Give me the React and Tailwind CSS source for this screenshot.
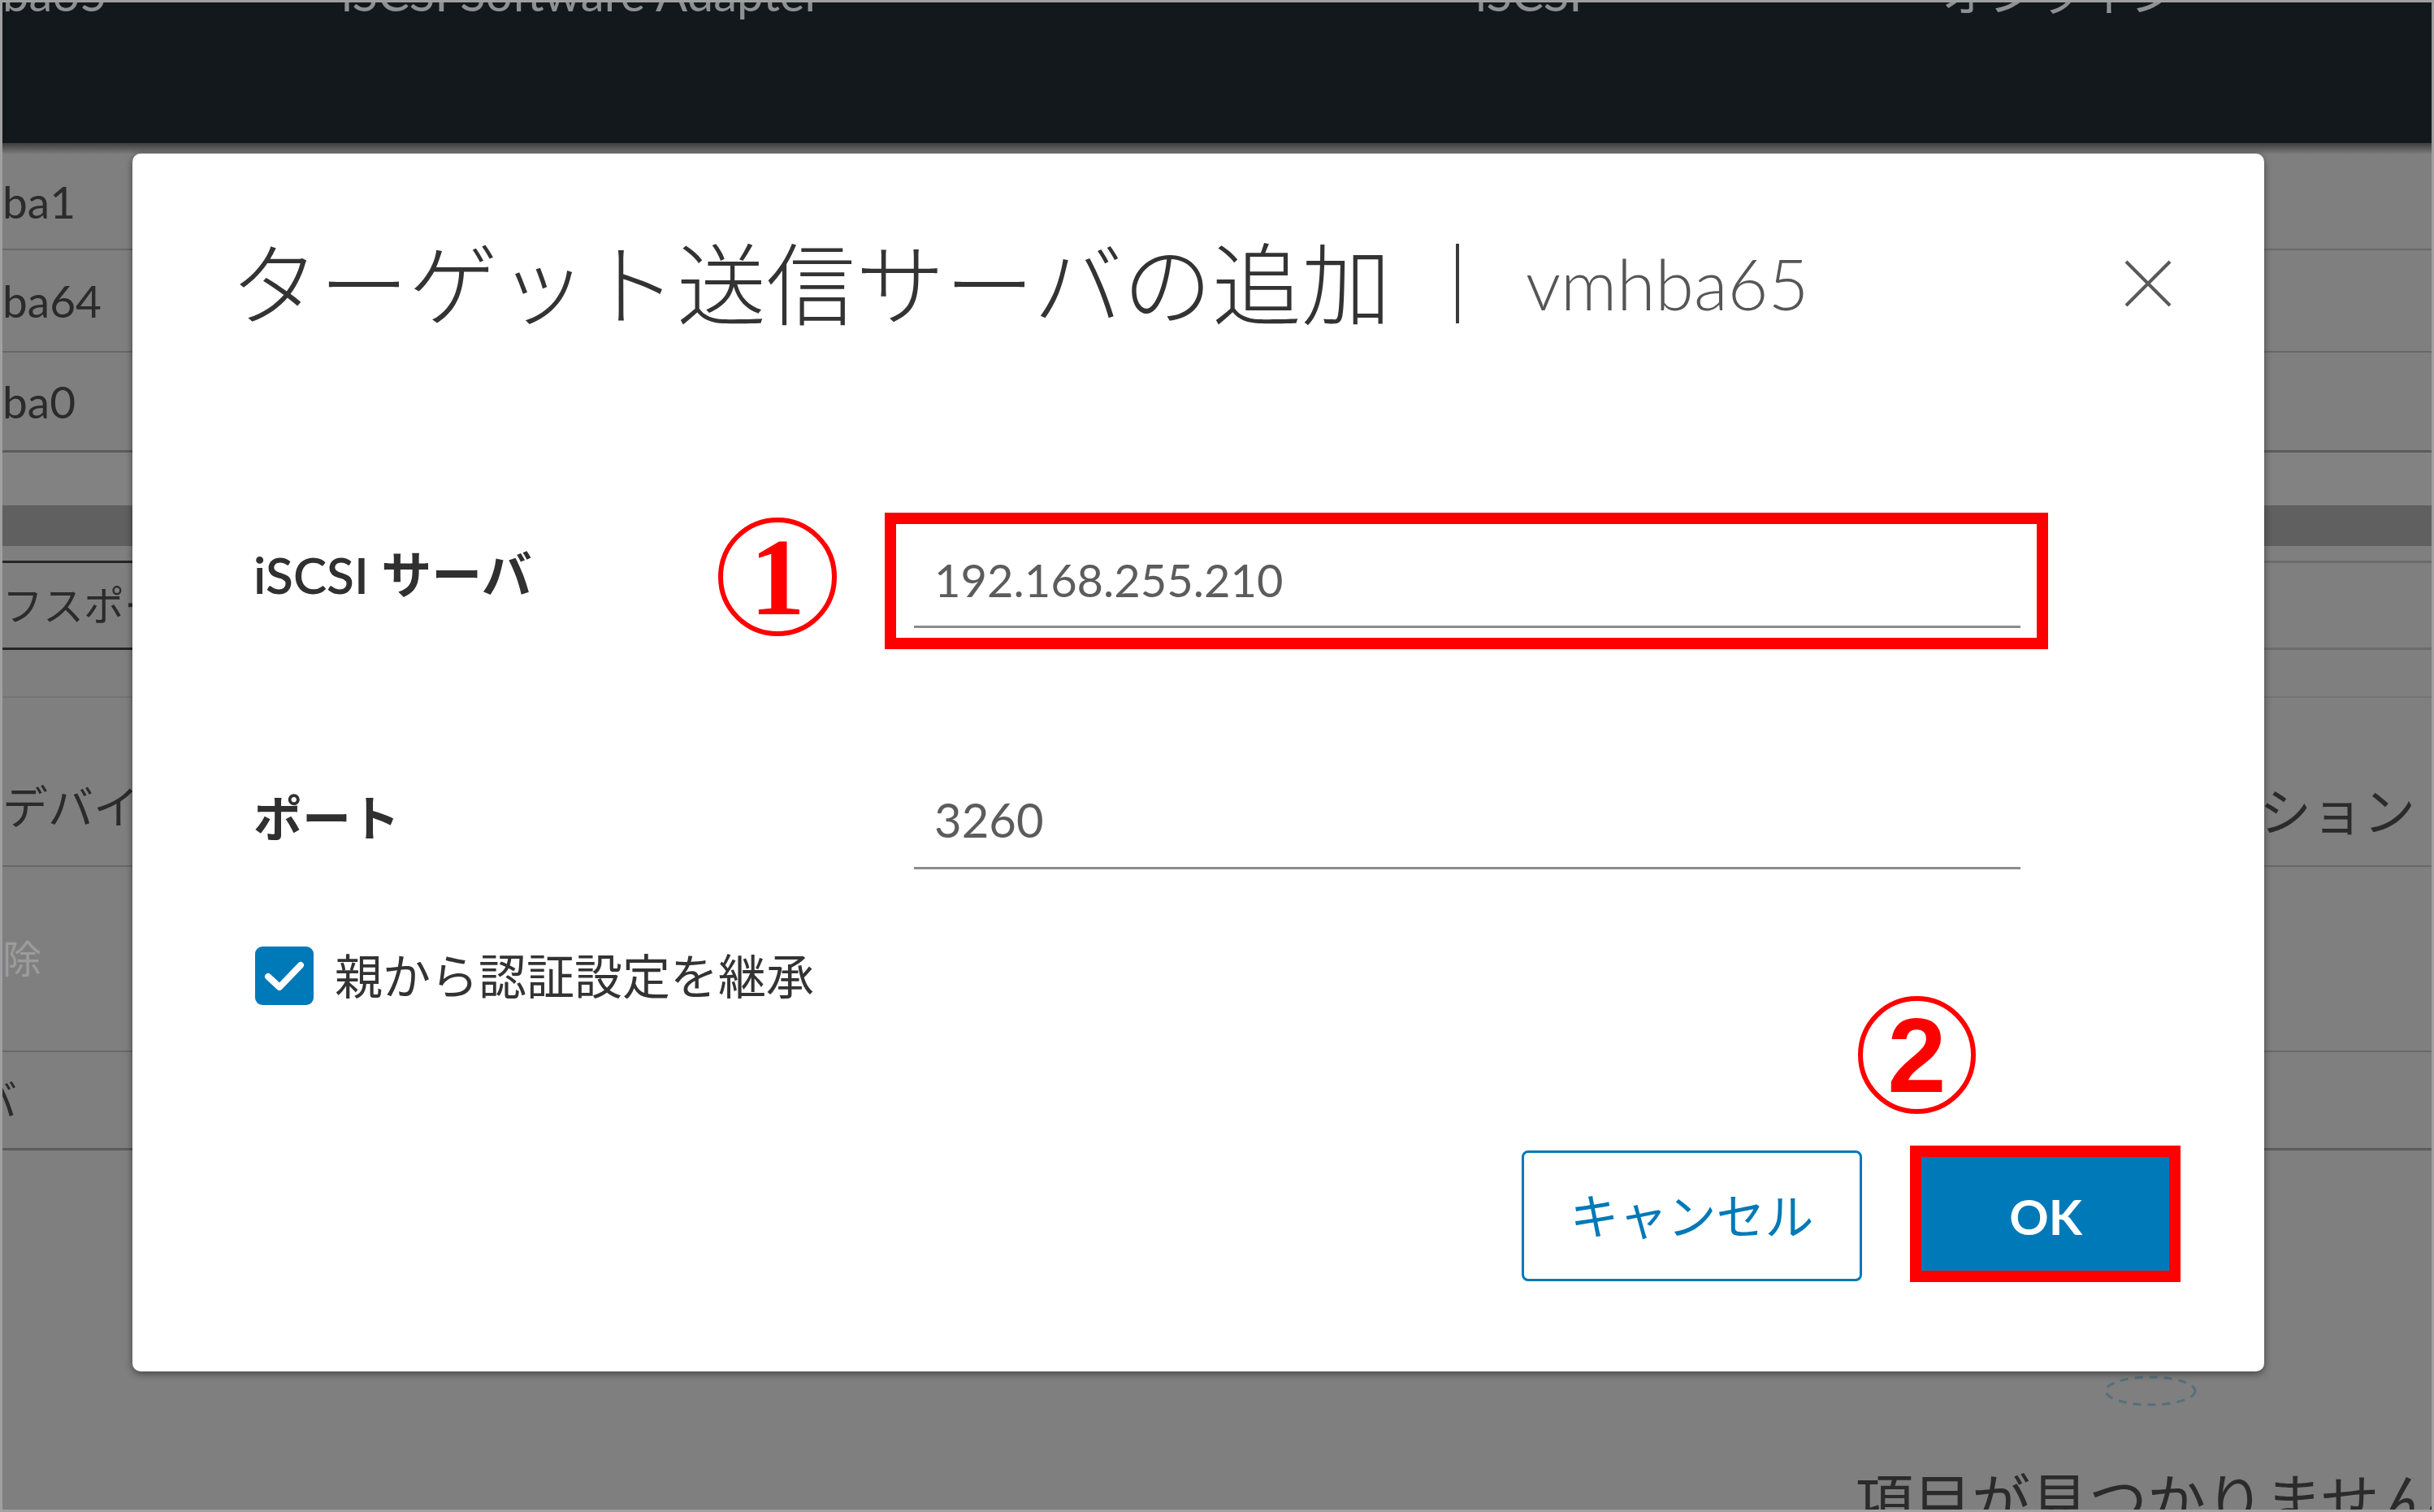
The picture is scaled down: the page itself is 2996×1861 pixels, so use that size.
import React from 'react'

function Rule({ h = 'h-[2px]', tone = 'bg-[#686868]', left = null }) {
  return (
    <div className={`flex ${h}`}>
      {left && <div className={`w-[160px] ${left}`} />}
      <div className={`flex-1 ${tone}`} />
    </div>
  )
}

function Background() {
  return (
    <div className="flex flex-col text-[#2b2b2b]">
      <div className="h-[173px] bg-[#12181b] overflow-hidden flex text-[58px] leading-none text-[#8d9194] whitespace-nowrap">
        <div className="w-[417px] -mt-[40px]">ba65</div>
        <div className="w-[1396px] -mt-[40px]">iSCSI Software Adapter</div>
        <div className="w-[574px] -mt-[40px]">iSCSI</div>
        <div className="-mt-[40px]">オンライン</div>
      </div>
      <div className="h-[14px] bg-gradient-to-b from-[#3d3d3d] to-[#7f7f7f]" />

      <div className="h-[116px] flex items-center text-[55px] leading-none">ba1</div>
      <Rule />
      <div className="h-[124px] flex items-center text-[55px] leading-none">ba64</div>
      <Rule />
      <div className="h-[120px] flex items-center text-[55px] leading-none">ba0</div>
      <Rule h="h-[3px]" tone="bg-[#5c5c5c]" />
      <div className="h-[65px] bg-[#828282]" />
      <div className="h-[50px] bg-[#606060]" />
      <div className="h-[18px]" />
      <Rule h="h-[3px]" tone="bg-[#6c6c6c]" left="bg-[#262626]" />
      <div className="h-[104px] flex items-center text-[50px] leading-none whitespace-nowrap">フスポート</div>
      <Rule h="h-[3px]" tone="bg-[#6c6c6c]" left="bg-[#262626]" />
      <div className="h-[57px]" />
      <Rule tone="bg-[#747474]" />
      <div className="h-[206px] flex items-start justify-between pt-[106px] text-[56px] leading-none whitespace-nowrap">
        <span>デバイス</span>
        <span className="mr-[20px] mt-[2px] text-[64px]">ション</span>
      </div>
      <Rule />
      <div className="h-[226px] flex items-center text-[48px] leading-none text-[#9c9c9c]">除</div>
      <Rule />
      <div className="h-[118px] flex items-center text-[52px] leading-none overflow-hidden">
        <span className="-ml-[34px]">バ</span>
      </div>
      <Rule h="h-[3px]" tone="bg-[#5c5c5c]" />

      <div className="flex flex-col">
        <div className="h-[276px]" />
        <div className="flex justify-end pr-[287px]">
          <svg width="118" height="40" viewBox="0 0 118 40">
            <ellipse cx="59" cy="20" rx="55" ry="17" fill="none" stroke="#55707a" strokeWidth="3" strokeDasharray="10 8" />
          </svg>
        </div>
        <div className="mt-[78px] pl-[2280px] text-[72px] leading-none whitespace-nowrap text-[#2b2b2b]">
          項目が見つかりません
        </div>
      </div>
    </div>
  )
}

function Dialog() {
  return (
    <div className="absolute left-[160px] top-[186px] w-[2624px] h-[1499px] bg-white rounded-[10px] shadow-[0_3px_10px_rgba(0,0,0,0.45)] flex flex-col text-[#303030]">
      <div className="mt-[90px] h-[140px] pl-[120px] pr-[113px] flex items-center whitespace-nowrap">
        <span className="text-[110px] font-light leading-none text-[#333333]">ターゲット送信サーバの追加</span>
        <div className="ml-[80px] w-[4px] h-[98px] bg-[#3a3a3a]" />
        <span className="ml-[82px] text-[86px] font-light leading-none text-[#565656]">vmhba65</span>
        <svg className="ml-auto" width="60" height="58" viewBox="0 0 60 58">
          <path d="M3 2 L57 56 M57 2 L3 56" stroke="#595959" strokeWidth="4" fill="none" />
        </svg>
      </div>

      <div className="mt-[212px] pl-[149px] pr-[300px] flex flex-col">
        <div className="flex h-[168px] items-center">
          <div className="w-[813px] mb-[16px] text-[62px] font-semibold leading-none whitespace-nowrap">iSCSI サーバ</div>
          <div className="relative flex-1 h-full flex items-center">
            <div className="w-full h-[116px] border-b-[3px] border-[#8c8c8c] flex items-center pl-[25px] text-[56px] leading-none text-[#5c5c5c]">
              192.168.255.210
            </div>
            <div className="pointer-events-none absolute top-0 bottom-0 -left-[36px] -right-[34px] border-[14px] border-[#ff0000]" />
          </div>
        </div>

        <div className="mt-[127px] flex h-[168px] items-center">
          <div className="w-[813px] mb-[6px] text-[60px] font-semibold leading-none">ポート</div>
          <div className="flex-1 h-full flex items-center">
            <div className="w-full h-[120px] border-b-[3px] border-[#8c8c8c] flex items-center pl-[25px] text-[58px] leading-none text-[#5c5c5c]">
              3260
            </div>
          </div>
        </div>

        <div className="mt-[71px] h-[72px] flex items-center gap-[26px]">
          <div className="ml-[2px] w-[72px] h-[72px] rounded-[9px] bg-[#0079b8] flex items-center justify-center">
            <svg width="72" height="72" viewBox="0 0 72 72">
              <polyline points="16,37 30,50 56,23" fill="none" stroke="#ffffff" strokeWidth="8" strokeLinecap="round" strokeLinejoin="round" />
            </svg>
          </div>
          <span className="text-[59px] leading-none text-[#333333]">親から認証設定を継承</span>
        </div>
      </div>

      <div className="mt-[179px] pr-[103px] flex justify-end">
        <button className="w-[419px] h-[161px] border-[3px] border-[#0079b8] rounded-[8px] text-[60px] leading-none text-[#0079b8]">
          キャンセル
        </button>
        <div className="relative ml-[60px]">
          <button className="w-[332px] h-[161px] bg-[#0079b8] rounded-[8px] text-[60px] font-bold leading-none text-white">
            OK
          </button>
          <div className="pointer-events-none absolute -top-[6px] -bottom-[1px] -left-[1px] right-0 border-[14px] border-[#ff0000]" />
        </div>
      </div>

      <div className="absolute left-[721px] top-[448px] w-[146px] h-[146px] rounded-full border-[6px] border-[#ff0000] flex items-center justify-center">
        <span className="font-['Liberation_Serif',serif] font-bold text-[136px] leading-none text-[#ff0000]">1</span>
      </div>
      <div className="absolute left-[2124px] top-[1037px] w-[145px] h-[145px] rounded-full border-[6px] border-[#ff0000] flex items-center justify-center">
        <span className="font-['Liberation_Sans',sans-serif] font-bold text-[130px] leading-none text-[#ff0000]">2</span>
      </div>
    </div>
  )
}

export default function App() {
  return (
    <div className="relative w-[2996px] h-[1861px] overflow-hidden border-[3px] border-[#a0a0a0] bg-[#7f7f7f] font-['Lato','Noto_Sans_CJK_JP',sans-serif]">
      <Background />
      <Dialog />
    </div>
  )
}
